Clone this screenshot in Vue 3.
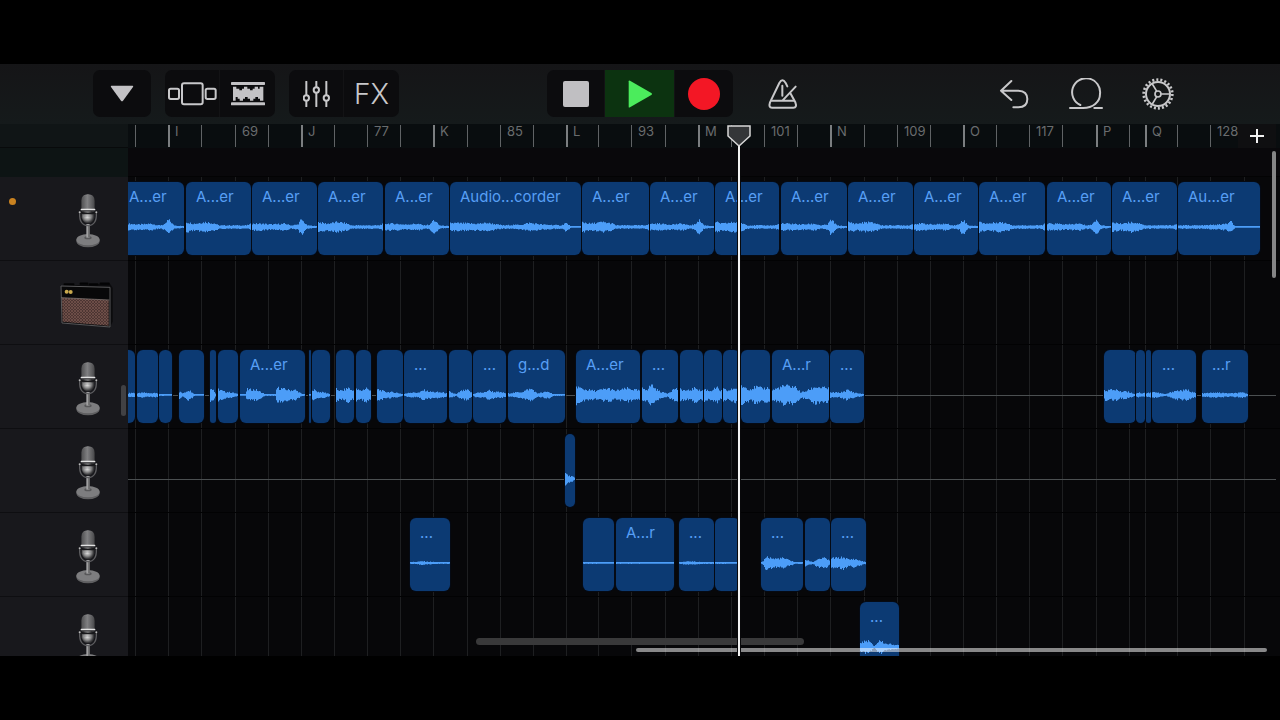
<template>
  <div class="screen">
    <header class="toolbar">
      <div class="tools tools-left">
        <div class="group">
          <button class="tool wide" aria-label="Browser">
            <svg width="24" height="17" viewBox="0 0 72 51">
              <path d="M4 2H68Q71 3 69 6L39 47Q36 51 33 47L3 6Q1 3 4 2Z" fill="#c3c2c5" />
            </svg>
          </button>
        </div>
        <div class="group">
          <button class="tool" aria-label="Sections">
            <svg class="line" width="50" height="24" viewBox="0 0 150 72">
              <rect x="3" y="20" width="30" height="31" rx="5" />
              <rect x="42" y="4" width="62" height="63" rx="6" />
              <rect x="113" y="20" width="30" height="31" rx="5" />
            </svg>
          </button>
          <button class="tool" aria-label="Tracks view">
            <svg width="34" height="24" viewBox="0 0 102 72" fill="#c3c2c5">
              <rect x="0" y="0" width="102" height="9" rx="2" />
              <rect x="0" y="61" width="102" height="9" rx="2" />
              <path d="M6 14H16V20H25V25H33V20H39V14H49V20H57V25H65V20H71V14H81V20H86V14H97V56H87V50H81V45H73V50H67V56H57V50H50V45H42V50H36V56H26V50H20V45H14V56H6Z" />
            </svg>
          </button>
        </div>
        <div class="group">
          <button class="tool" aria-label="Mixer">
            <svg class="line" width="28" height="26" viewBox="0 0 84 78">
              <path d="M10 2V42M10 60V76M40 2V18M40 36V76M70 2V42M70 60V76" />
              <circle cx="10" cy="51" r="8" />
              <circle cx="40" cy="27" r="8" />
              <circle cx="70" cy="51" r="8" />
            </svg>
          </button>
          <button class="tool fx">FX</button>
        </div>
      </div>

      <div class="group transport">
        <button class="tool wide" aria-label="Stop"><span class="stop"></span></button>
        <button class="tool play" aria-label="Play">
          <svg width="24" height="28" viewBox="0 0 72 84">
            <path d="M2 4Q2 0 6 2L70 39Q74 42 70 45L6 82Q2 84 2 80Z" fill="#4bec5c" />
          </svg>
        </button>
        <button class="tool wide" aria-label="Record"><span class="record"></span></button>
      </div>

      <div class="tools tools-right">
        <button class="plain" aria-label="Metronome">
          <svg class="line" width="30" height="30" viewBox="0 0 90 90">
            <path d="M68 44L82 70Q88 86 76 86H12Q1 86 6 70L34 12Q43 -4 53 12L58 22" />
            <path d="M11 65H78M44 64L83 23M43 20V50" />
          </svg>
        </button>
        <span class="spacer"></span>
        <button class="plain" aria-label="Undo">
          <svg class="line" width="30" height="30" viewBox="0 0 90 90">
            <path d="M37 6L6 35L37 63M6 35H58Q85 36 85 60Q85 85 58 85H43" />
          </svg>
        </button>
        <button class="plain" aria-label="Loop browser">
          <svg class="line" width="34" height="32" viewBox="0 0 102 96">
            <path d="M3 90H42C72 90 93 72 93 48A42 42 0 1 0 34 81" />
            <path d="M76 90H99" />
          </svg>
        </button>
        <button class="plain" aria-label="Settings">
          <svg class="line" width="32" height="32" viewBox="0 0 96 96">
            <circle cx="48" cy="48" r="43" pathLength="44" stroke-dasharray="1 1" stroke-width="8" stroke-linecap="butt" />
            <circle cx="48" cy="48" r="36" />
            <circle cx="48" cy="48" r="9" stroke-width="5" />
            <path d="M59 48H83M43 38L31 18M43 58L31 78" stroke-width="5" />
          </svg>
        </button>
      </div>
    </header>

    <main class="workspace">
      <aside class="heads">
        <div class="head-ruler"></div>
        <div class="head-gap"></div>
        <div v-for="(track, t) in tracks" :key="t" class="head">
          <span v-if="t === 0" class="dot"></span>
          <svg v-if="track.kind === 'mic'" class="mic" width="26" height="54" viewBox="0 0 78 162">
            <defs>
              <linearGradient id="metal" x1="0" x2="1">
                <stop offset="0" stop-color="#4b4b4d" />
                <stop offset="0.45" stop-color="#969697" />
                <stop offset="1" stop-color="#434345" />
              </linearGradient>
              <radialGradient id="bowl" cx="0.45" cy="0.45">
                <stop offset="0" stop-color="#f0f0f0" />
                <stop offset="0.6" stop-color="#8b8b8c" />
                <stop offset="1" stop-color="#343436" />
              </radialGradient>
            </defs>
            <ellipse cx="39" cy="141" rx="35" ry="19" fill="#5f5f61" />
            <ellipse cx="39" cy="137" rx="35" ry="17" fill="#7d7d7f" />
            <ellipse cx="39" cy="131" rx="11" ry="5" fill="#58585a" />
            <rect x="34" y="90" width="10" height="41" fill="#a0a0a1" />
            <rect x="40" y="94" width="4" height="36" fill="#5d5d5f" />
            <path d="M14 56Q12 94 39 95Q66 94 64 56" fill="none" stroke="#5d5d60" stroke-width="4" />
            <path d="M20 50H58V70Q54 88 39 88Q24 88 20 70Z" fill="url(#bowl)" />
            <path d="M19 47V20Q20 1 39 1Q58 1 59 20V47Z" fill="url(#metal)" />
            <path d="M27 6V44M33 4V44M39 3V44M45 4V44M51 6V44" stroke="#555557" stroke-width="2" />
            <rect x="17" y="44" width="44" height="5" rx="2" fill="#e2e2e2" />
            <path d="M14 55Q39 62 64 55" fill="none" stroke="#18181b" stroke-width="5" />
            <path d="M27 66H51" stroke="#777779" stroke-width="2" />
            <circle cx="14" cy="55" r="3" fill="#bababa" />
            <circle cx="64" cy="55" r="3" fill="#bababa" />
          </svg>
          <svg v-else class="amp" width="54" height="48" viewBox="0 0 162 144">
            <defs>
              <pattern id="cloth" width="9" height="9" patternUnits="userSpaceOnUse">
                <rect width="9" height="9" fill="#4c3532" />
                <path d="M0 0L9 9M9 0L0 9" stroke="#7a5750" stroke-width="2" />
              </pattern>
            </defs>
            <path d="M4 14L150 8L158 20V122L150 139L6 126Z" fill="#0b0b0d" />
            <path d="M14 10H40M62 8H82M90 10H112M122 8H146" stroke="#030304" stroke-width="7" stroke-linecap="round" />
            <path d="M3 15L150 19V138L6 126Z" fill="#080809" stroke="#58585a" stroke-width="3" />
            <path d="M6 50L146 57V134L8 122Z" fill="url(#cloth)" />
            <path d="M4 50L148 57" stroke="#8d8480" stroke-width="2" />
            <circle cx="20" cy="32" r="6" fill="#c9a94e" />
            <circle cx="32" cy="33" r="6" fill="#c9a94e" />
          </svg>
        </div>
        <span class="grip"></span>
      </aside>

      <section class="timeline">
        <div class="ruler">
          <span
            v-for="tick in ticks"
            :key="tick.x"
            class="tick"
            :class="{ strong: tick.strong }"
            :style="{ left: tick.x + 'px' }"
          >{{ tick.label }}</span>
          <button class="add" aria-label="Add section">
            <svg width="14" height="14" viewBox="0 0 14 14">
              <path d="M7 0V14M0 7H14" stroke="#f1f1f1" stroke-width="2" />
            </svg>
          </button>
        </div>
        <div class="gap"></div>

        <div class="lanes">
          <span v-for="x in gridLines" :key="x" class="grid-line" :style="{ left: x + 'px' }"></span>
          <div v-for="(track, t) in tracks" :key="t" class="lane" :class="{ zero: track.zeroLine }">
            <div
              v-for="clip in track.clips"
              :key="clip[0]"
              class="clip"
              :style="{ left: clip[0] + 'px', width: clip[1] + 'px' }"
            >
              <span class="name">{{ clip[2] }}</span>
              <svg class="wave" :width="clip[1]" height="40" :viewBox="`0 0 ${clip[1]} 40`">
                <path :d="wavePath(clip[0], clip[1], shapes[clip[3]])" />
              </svg>
            </div>
          </div>
        </div>

        <span class="scroll-y"></span>
        <span class="scroll-x"></span>
      </section>

      <span class="home-bar"></span>
      <div class="playhead">
        <svg width="24" height="24" viewBox="0 0 24 24">
          <path d="M1 2H23V12L12 22L1 12Z" fill="#343638" stroke="#d8d8d8" stroke-width="1.5" />
        </svg>
      </div>
    </main>
  </div>
</template>

<script setup>
import { computed } from 'vue';

// Positions are pixels from the left edge of the timeline
const ticks = [
  { x: 7 },
  { x: 40, label: 'I', strong: true },
  { x: 73 },
  { x: 107, label: '69' },
  { x: 140 },
  { x: 173, label: 'J', strong: true },
  { x: 206 },
  { x: 239, label: '77' },
  { x: 272 },
  { x: 305, label: 'K', strong: true },
  { x: 339 },
  { x: 372, label: '85' },
  { x: 405 },
  { x: 438, label: 'L', strong: true },
  { x: 470 },
  { x: 503, label: '93' },
  { x: 537 },
  { x: 570, label: 'M', strong: true },
  { x: 603 },
  { x: 636, label: '101' },
  { x: 669 },
  { x: 702, label: 'N', strong: true },
  { x: 736 },
  { x: 769, label: '109' },
  { x: 802 },
  { x: 835, label: 'O', strong: true },
  { x: 868 },
  { x: 901, label: '117' },
  { x: 934 },
  { x: 968, label: 'P', strong: true },
  { x: 1001 },
  { x: 1017, label: 'Q', strong: true },
  { x: 1049 },
  { x: 1082, label: '128' },
];

const gridLines = computed(() => [...ticks.map((t) => t.x), 1116]);

// Loudness over a clip: [position 0..1, amplitude in px]
const shapes = {
  spike: [[0, 4], [0.15, 4], [0.3, 3], [0.5, 4], [0.6, 2], [0.7, 3], [0.74, 8], [0.77, 8], [0.84, 2], [1, 1]],
  fade: [[0, 6], [0.12, 4], [0.3, 6], [0.45, 4], [0.5, 2], [0.8, 2], [0.93, 2], [1, 4]],
  long: [[0, 5], [0.2, 4], [0.28, 5], [0.4, 2], [0.55, 3], [0.6, 5], [0.7, 3], [0.85, 2], [0.88, 5], [0.92, 1], [1, 0.5]],
  tail: [[0, 2], [0.3, 2], [0.5, 3], [0.6, 4], [0.64, 7], [0.68, 2], [0.7, 0.5], [1, 0.5]],
  low: [[0, 2], [0.3, 3], [0.6, 2], [0.9, 3], [1, 1]],
  flat: [[0, 1], [0.3, 2], [0.7, 1], [1, 1]],
  line: [[0, 1], [0.4, 1], [1, 0.5]],
  hump: [[0, 4], [0.15, 2], [0.35, 6], [0.5, 4], [0.6, 1], [1, 0.5]],
  hit: [[0, 9], [0.5, 7], [0.7, 3], [1, 0.5]],
  drop: [[0, 7], [0.3, 4], [0.7, 3], [1, 1]],
  twin: [[0, 0.5], [0.08, 1], [0.1, 7], [0.25, 6], [0.38, 1], [0.54, 1], [0.56, 9], [0.75, 6], [0.85, 6], [0.95, 1], [1, 1]],
  swell: [[0, 7], [0.3, 5], [0.7, 9], [0.85, 5], [1, 6]],
  mild: [[0, 1], [0.1, 3], [0.35, 3], [0.45, 6], [0.6, 4], [0.9, 3], [1, 2]],
  rise: [[0, 4], [0.3, 1], [0.5, 5], [0.8, 6], [1, 2]],
  body: [[0, 2], [0.25, 4], [0.35, 7], [0.42, 7], [0.5, 2], [0.7, 4], [0.8, 1], [1, 1]],
  loud: [[0, 11], [0.1, 7], [0.3, 5], [0.5, 8], [0.6, 5], [0.8, 8], [1, 5]],
  peak: [[0, 8], [0.15, 7], [0.25, 13], [0.35, 8], [0.5, 4], [0.7, 2], [0.9, 8], [1, 7]],
  full: [[0, 11], [0.3, 7], [0.5, 10], [0.7, 8], [1, 9]],
  two: [[0, 6], [0.2, 11], [0.4, 10], [0.5, 3], [0.6, 5], [0.75, 10], [1, 8]],
  soft: [[0, 3], [0.3, 3], [0.5, 6], [0.7, 3], [1, 1]],
  burst: [[0, 1], [0.06, 3], [0.1, 8], [0.3, 5], [0.5, 6], [0.7, 3], [0.8, 1], [1, 1]],
  end: [[0, 6], [0.2, 6], [0.35, 7], [0.5, 4], [0.65, 5], [0.9, 2], [1, 1]],
  double: [[0, 5], [0.2, 8], [0.35, 1], [0.5, 8], [0.65, 4], [0.85, 3], [1, 2]],
};

// clip: [left, width, label, shape]
const tracks = [
  {
    kind: 'mic',
    clips: [
      [-9, 65, 'A...er', 'spike'],
      [58, 65, 'A...er', 'fade'],
      [124, 65, 'A...er', 'spike'],
      [190, 65, 'A...er', 'fade'],
      [257, 64, 'A...er', 'spike'],
      [322, 131, 'Audio...corder', 'long'],
      [454, 67, 'A...er', 'fade'],
      [522, 64, 'A...er', 'spike'],
      [587, 64, 'A...er', 'fade'],
      [653, 66, 'A...er', 'spike'],
      [720, 65, 'A...er', 'fade'],
      [786, 64, 'A...er', 'spike'],
      [851, 66, 'A...er', 'fade'],
      [919, 64, 'A...er', 'spike'],
      [984, 65, 'A...er', 'fade'],
      [1050, 82, 'Au...er', 'tail'],
    ],
  },
  { kind: 'amp', clips: [] },
  {
    kind: 'mic',
    zeroLine: true,
    clips: [
      [-12, 19, '', 'low'],
      [9, 21, '', 'low'],
      [31, 13, '', 'line'],
      [51, 25, '', 'hump'],
      [82, 6, '', 'hit'],
      [90, 20, '', 'drop'],
      [112, 65, 'A...er', 'twin'],
      [181, 2, '', 'line'],
      [184, 18, '', 'drop'],
      [208, 18, '', 'swell'],
      [228, 15, '', 'swell'],
      [249, 26, '', 'drop'],
      [276, 43, '...', 'mild'],
      [321, 23, '', 'rise'],
      [345, 33, '...', 'mild'],
      [380, 57, 'g...d', 'body'],
      [448, 64, 'A...er', 'loud'],
      [514, 36, '...', 'peak'],
      [552, 23, '', 'swell'],
      [576, 18, '', 'swell'],
      [595, 17, '', 'swell'],
      [613, 29, '', 'full'],
      [644, 57, 'A...r', 'two'],
      [702, 34, '...', 'soft'],
      [976, 32, '', 'end'],
      [1008, 9, '', 'low'],
      [1018, 5, '', 'low'],
      [1024, 44, '...', 'rise'],
      [1074, 46, '...r', 'low'],
    ],
  },
  { kind: 'mic', zeroLine: true, clips: [[437, 10, '', 'drop']] },
  {
    kind: 'mic',
    clips: [
      [282, 40, '...', 'flat'],
      [455, 31, '', 'line'],
      [488, 58, 'A...r', 'line'],
      [551, 35, '...', 'flat'],
      [587, 25, '', 'line'],
      [633, 42, '...', 'burst'],
      [677, 25, '', 'rise'],
      [703, 35, '...', 'end'],
    ],
  },
  { kind: 'mic', clips: [[732, 39, '...', 'double']] },
];

function noise(n) {
  const v = Math.sin(n * 12.9898) * 43758.5453;
  return v - Math.floor(v);
}

function levelAt(shape, p) {
  for (let i = 1; i < shape.length; i++) {
    const [x0, a0] = shape[i - 1];
    const [x1, a1] = shape[i];
    if (p <= x1) return a0 + ((a1 - a0) * (p - x0)) / (x1 - x0);
  }
  return shape[shape.length - 1][1];
}

function wavePath(seed, width, shape) {
  let top = '';
  let bottom = '';
  for (let x = 0; x < width; x++) {
    const level = levelAt(shape, x / width);
    const up = Math.max(1, level * (0.6 + 0.4 * noise(seed + x)));
    const down = Math.max(0.8, level * (0.6 + 0.4 * noise(seed + x + 500)));
    top += `L${x} ${(20 - up).toFixed(1)}H${x + 1}`;
    bottom = `L${x + 1} ${(20 + down).toFixed(1)}H${x}` + bottom;
  }
  return `M0 20${top}${bottom}Z`;
}
</script>

<style>
body {
  background: #000;
}
</style>

<style scoped>
.screen {
  display: flex;
  flex-direction: column;
  height: 100vh;
  padding: 64px 0;
  box-sizing: border-box;
  background: #000;
  font-family: Inter, "Liberation Sans", sans-serif;
  overflow: hidden;
}
button {
  border: none;
  padding: 0;
  margin: 0;
  background: none;
  color: inherit;
  font: inherit;
  cursor: pointer;
}
svg {
  display: block;
}
.line {
  fill: none;
  stroke: #c8c8ca;
  stroke-width: 6;
  stroke-linecap: round;
  stroke-linejoin: round;
}

/* toolbar */
.toolbar {
  display: grid;
  grid-template-columns: 1fr auto 1fr;
  align-items: center;
  height: 60px;
  padding-bottom: 1px;
  box-sizing: border-box;
  flex: none;
  background: linear-gradient(#151517, #151a1b);
}
.tools {
  display: flex;
  align-items: center;
}
.tools-left {
  gap: 14px;
  padding-left: 93px;
}
.tools-right {
  padding-left: 14px;
  padding-right: 86px;
}
.group {
  display: flex;
  height: 47px;
  border-radius: 7px;
  background: #0c0c0e;
  overflow: hidden;
}
.tool {
  display: flex;
  align-items: center;
  justify-content: center;
  width: 55px;
}
.tool + .tool {
  box-shadow: -1px 0 #131315;
}
.tool.wide {
  width: 58px;
}
.group .fx {
  color: #c8c8ca;
  font-size: 28px;
  font-weight: 300;
}
.tool.play {
  width: 70px;
  background: #0c3310;
}
.stop {
  width: 26px;
  height: 26px;
  border-radius: 2px;
  background: #c0bfc2;
}
.record {
  width: 32px;
  height: 32px;
  border-radius: 50%;
  background: #f31725;
}
.plain {
  display: flex;
  align-items: center;
  justify-content: center;
  width: 72px;
  height: 47px;
}
.spacer {
  flex: 1;
}

/* workspace */
.workspace {
  position: relative;
  display: grid;
  grid-template-columns: 128px 1fr;
  grid-template-rows: 100%;
  flex: 1;
  min-height: 0;
  overflow: hidden;
}
.heads {
  position: relative;
  background: #18181c;
  overflow: hidden;
}
.head-ruler {
  height: 23px;
  background: #101516;
  border-bottom: 1px solid #080a0b;
}
.head-gap {
  height: 29px;
  background: #0d1414;
}
.head {
  display: flex;
  align-items: center;
  justify-content: space-between;
  height: 84px;
  box-sizing: border-box;
  padding: 4px 14px 0 9px;
  border-bottom: 1px solid #0e0e11;
}
.mic {
  margin-left: auto;
  margin-right: 13px;
}
.amp {
  margin-left: auto;
}
.dot {
  width: 7px;
  height: 7px;
  margin-bottom: 38px;
  border-radius: 50%;
  background: #c98220;
}
.grip {
  position: absolute;
  right: 2px;
  top: 261px;
  width: 5px;
  height: 31px;
  border-radius: 3px;
  background: #414144;
}

.timeline {
  position: relative;
  min-width: 0;
  overflow: hidden;
  background: #070709;
}
.ruler {
  position: relative;
  height: 24px;
  background: #090d0f;
  overflow: hidden;
}
.tick {
  position: absolute;
  top: 1px;
  height: 22px;
  padding-left: 6px;
  border-left: 1px solid #606365;
  color: #696c6e;
  font-size: 13px;
  line-height: 12px;
}
.tick.strong {
  padding-left: 5px;
  border-left: 2px solid #7b7e80;
}
.add {
  position: absolute;
  right: 4px;
  top: 0;
  display: flex;
  align-items: center;
  justify-content: center;
  width: 38px;
  height: 24px;
  background: #0f0f11;
}
.gap {
  height: 28px;
  background: #09080b;
  border-bottom: 1px solid #030304;
}
.lanes {
  position: relative;
}
.grid-line {
  position: absolute;
  top: 0;
  bottom: 0;
  width: 1px;
  background: #1e1f21;
}
.lane {
  position: relative;
  height: 84px;
  box-sizing: border-box;
  border-bottom: 1px solid #020203;
}
.lane.zero::before {
  content: "";
  position: absolute;
  left: 0;
  right: 4px;
  top: 50px;
  height: 1px;
  background: #4b4f51;
}
.clip {
  position: absolute;
  top: 5px;
  height: 73px;
  border-radius: 6px;
  background: #0c3a73;
  box-shadow: 0 0 0 1px #050a14;
  overflow: hidden;
}
.name {
  display: block;
  padding: 6px 0 0 10px;
  color: #579ff5;
  font-size: 15px;
  line-height: 18px;
  white-space: nowrap;
}
.wave {
  position: absolute;
  left: 0;
  top: 25px;
  fill: #4c9df8;
}

/* overlays */
.scroll-y {
  position: absolute;
  right: 4px;
  top: 27px;
  width: 4px;
  height: 127px;
  border-radius: 2px;
  background: #858586;
}
.scroll-x {
  position: absolute;
  left: 508px;
  right: 13px;
  bottom: 4px;
  height: 4px;
  border-radius: 2px;
  background: rgba(255, 255, 255, 0.52);
}
.home-bar {
  position: absolute;
  left: 50%;
  bottom: 11px;
  width: 328px;
  height: 7px;
  margin-left: -164px;
  border-radius: 4px;
  background: #39393a;
}
.playhead {
  position: absolute;
  left: 727px;
  top: 0;
  bottom: 0;
  width: 24px;
}
.playhead::before {
  content: "";
  position: absolute;
  left: 11px;
  top: 22px;
  bottom: 0;
  width: 2px;
  background: #f2f2f2;
  box-shadow: 0 0 0 1px #08080a;
}
.playhead svg {
  position: relative;
}
</style>
